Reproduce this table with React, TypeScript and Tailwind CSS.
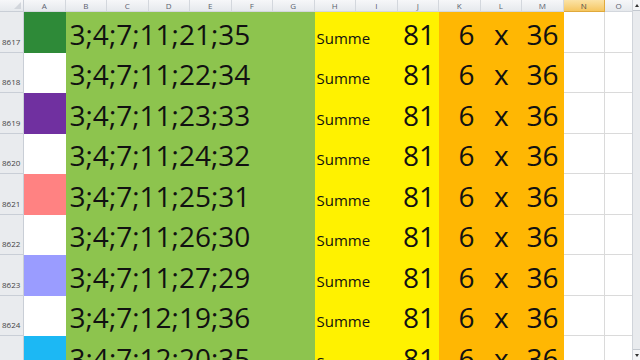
import React from 'react'

const rows = [
  { n: 8617, fill: 'bg-[#2e8a38]', combo: '3;4;7;11;21;35' },
  { n: 8618, fill: 'bg-white', combo: '3;4;7;11;22;34' },
  { n: 8619, fill: 'bg-[#7030a0]', combo: '3;4;7;11;23;33' },
  { n: 8620, fill: 'bg-white', combo: '3;4;7;11;24;32' },
  { n: 8621, fill: 'bg-[#ff8282]', combo: '3;4;7;11;25;31' },
  { n: 8622, fill: 'bg-white', combo: '3;4;7;11;26;30' },
  { n: 8623, fill: 'bg-[#9a9cff]', combo: '3;4;7;11;27;29' },
  { n: 8624, fill: 'bg-white', combo: '3;4;7;12;19;36' },
  { n: 8625, fill: 'bg-[#1cb8f4]', combo: '3;4;7;12;20;35' },
]

const letters = ['A', 'B', 'C', 'D', 'E', 'F', 'G', 'H', 'I', 'J', 'K', 'L', 'M']

const font = { fontFamily: '"Open Sans", "Liberation Sans", sans-serif' }

function ColumnHeader() {
  return (
    <div className="flex h-[12px] shrink-0 text-[8px] leading-[11px] text-[#5b6270]">
      <div className="w-[24px] shrink-0 relative bg-gradient-to-b from-[#f6f7f9] to-[#e6e9ed] border-r border-b border-[#c9ced6]">
        <div className="absolute right-[2px] bottom-[2px] w-0 h-0 border-l-[7px] border-l-transparent border-b-[7px] border-b-[#d2d6dc]" />
      </div>
      {letters.map((l) => (
        <div
          key={l}
          className="w-[41.5px] shrink-0 text-center bg-gradient-to-b from-[#f6f7f9] to-[#e6e9ed] border-r border-b border-[#d3d7dd]"
        >
          {l}
        </div>
      ))}
      <div className="w-[41.5px] shrink-0 text-center bg-gradient-to-b from-[#fbe3a6] to-[#f5c65f] border-r border-b border-[#e0a93c] text-[#4a4a4a]">
        N
      </div>
      <div className="flex-1 text-center bg-gradient-to-b from-[#f6f7f9] to-[#e6e9ed] border-b border-[#d3d7dd]">O</div>
    </div>
  )
}

function Row({ n, fill, combo }: { n: number; fill: string; combo: string }) {
  return (
    <div className="flex h-[40.5px] shrink-0">
      <div className="w-[24px] shrink-0 bg-[#e9ebee] border-r border-b border-[#c9ced6] flex items-end pb-[6px] pl-[2px] text-[8px] leading-none text-[#444]">
        {n}
      </div>
      <div className={`w-[41.5px] shrink-0 ${fill}`} />
      <div className="w-[249px] shrink-0 bg-[#8dc44e] flex items-end pl-[4px] pb-[5px] text-[28px] leading-none text-[#111]">
        {combo}
      </div>
      <div className="w-[124.5px] shrink-0 bg-[#fff200] flex items-end justify-between text-[#111]">
        <span className="text-[15px] leading-none pl-[2px] pb-[7px]">Summe</span>
        <span className="text-[28px] leading-none pr-[4px] pb-[5px]">81</span>
      </div>
      <div className="w-[124.5px] shrink-0 bg-[#ffb703] flex items-end text-[28px] leading-none text-[#111]">
        <span className="w-[41.5px] text-right pr-[6px] pb-[5px]">6</span>
        <span className="w-[41.5px] text-center pb-[5px]">x</span>
        <span className="w-[41.5px] text-right pr-[5px] pb-[5px]">36</span>
      </div>
      <div className="w-[41.5px] shrink-0 border-r border-b border-[#dadada]" />
      <div className="flex-1 border-b border-[#dadada]" />
    </div>
  )
}

function ScrollBar() {
  return (
    <div className="w-[8px] shrink-0 bg-[#e9ebee] border-l border-[#d0d4da] flex flex-col justify-between">
      <div className="h-[11px] bg-[#f4f5f7] border-b border-[#c3c8cf] flex items-center justify-center">
        <div className="w-0 h-0 border-l-[2px] border-r-[2px] border-b-[3px] border-l-transparent border-r-transparent border-b-[#333]" />
      </div>
      <div className="h-[11px] bg-[#f4f5f7] border-t border-[#c3c8cf] flex items-center justify-center">
        <div className="w-0 h-0 border-l-[2px] border-r-[2px] border-t-[3px] border-l-transparent border-r-transparent border-t-[#333]" />
      </div>
    </div>
  )
}

export default function App() {
  return (
    <div className="w-[640px] h-[360px] overflow-hidden bg-white flex" style={font}>
      <div className="flex-1 flex flex-col overflow-hidden">
        <ColumnHeader />
        {rows.map((r) => (
          <Row key={r.n} {...r} />
        ))}
      </div>
      <ScrollBar />
    </div>
  )
}
